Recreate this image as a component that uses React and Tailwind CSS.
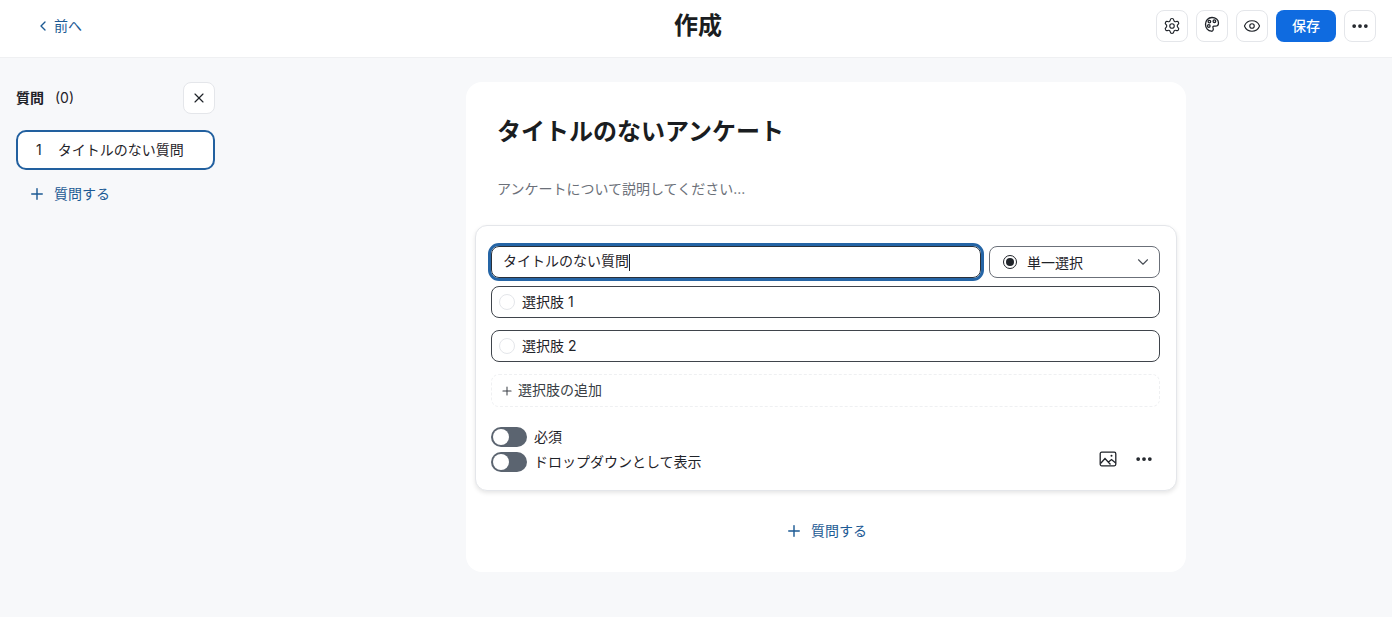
import React from "react";
import { ChevronLeft, ChevronDown, Ellipsis, Eye, Plus, Settings, X } from "lucide-react";

const FONT = "font-['Inter','Noto_Sans_CJK_JP',sans-serif]";

function IconButton({ children }) {
  return (
    <button className="flex h-8 w-8 items-center justify-center rounded-lg border border-[#e4e6ea] bg-white text-[#1f2329]">
      {children}
    </button>
  );
}

// face-like palette, sits a little high in its button
function PaletteIcon() {
  return (
    <svg width="16" height="17" viewBox="0 0 16 17" fill="none" stroke="currentColor" strokeWidth="1.3" className="-mt-1">
      <path d="M8 1.5c3.6 0 6.5 2.4 6.5 5.4 0 2.2-1.7 3.2-3.4 3.2H10c-.9 0-1.4.8-1 1.6.5 1 .4 2-.1 2.8-.3.5-.8.8-1.4.7C4 15 1.5 12 1.5 8.2 1.5 4.4 4.3 1.5 8 1.5Z" />
      <circle cx="5.4" cy="5.6" r="1.3" />
      <circle cx="10.4" cy="5.2" r="1.3" />
      <circle cx="4.8" cy="10" r="1.3" />
    </svg>
  );
}

function PhotoIcon() {
  return (
    <svg width="18" height="16" viewBox="0 0 18 16" fill="none" stroke="currentColor" strokeWidth="1.3">
      <rect x="1.2" y="1.2" width="15.6" height="13.6" rx="1.5" />
      <path d="M1.5 12.5 6 7.5l5.5 6M9.5 11l3-2.5 4.2 3.5" />
      <circle cx="12.5" cy="4.8" r="1" fill="currentColor" stroke="none" />
    </svg>
  );
}

function Toggle({ label }) {
  return (
    <div className="flex h-[25px] items-center gap-[7px]">
      <span className="flex h-5 w-9 items-center rounded-full bg-[#5b6470] pl-0.5">
        <span className="h-4 w-4 rounded-full bg-white" />
      </span>
      <span className="text-sm text-[#1f2329]">{label}</span>
    </div>
  );
}

function Choice({ label }) {
  return (
    <div className="flex h-8 items-center rounded-lg border border-[#3f444b] bg-white pl-[7px]">
      <span className="h-4 w-4 rounded-full border border-[#e4e6ea]" />
      <span className="ml-[7px] text-sm text-[#1f2329]">{label}</span>
    </div>
  );
}

function AddQuestion({ className = "" }) {
  return (
    <button className={`flex items-center gap-2 text-sm text-[#1c5a94] ${className}`}>
      <Plus size={18} strokeWidth={1.9} />
      質問する
    </button>
  );
}

export default function App() {
  return (
    <div className={`${FONT} flex min-h-[617px] flex-col bg-[#f7f8fa]`}>
      <header className="grid h-[58px] grid-cols-[1fr_auto_1fr] items-center border-b border-[#eff0f2] bg-white pb-[5px]">
        <button className="flex items-center gap-[3px] justify-self-start pl-[35px] text-sm text-[#1c5a94]">
          <ChevronLeft size={16} strokeWidth={2} />
          前へ
        </button>
        <h1 className="pl-1 text-2xl font-bold text-[#1a1d21]">作成</h1>
        <div className="flex items-center justify-end gap-2 pr-4">
          <IconButton><Settings size={18} strokeWidth={1.5} /></IconButton>
          <IconButton><PaletteIcon /></IconButton>
          <IconButton><Eye size={18} strokeWidth={1.5} /></IconButton>
          <button className="h-8 w-[60px] rounded-lg bg-[#0f6be0] text-sm font-medium text-white">保存</button>
          <IconButton><Ellipsis size={20} strokeWidth={2.5} /></IconButton>
        </div>
      </header>

      <div className="flex flex-1">
        <aside className="w-[260px] pl-4 pr-[45px] pt-6">
          <div className="flex h-8 items-center justify-between">
            <div className="flex items-center gap-[11px] text-sm text-[#1f2329]">
              <span className="font-bold">質問</span>
              <span>(0)</span>
            </div>
            <IconButton><X size={16} strokeWidth={1.75} /></IconButton>
          </div>
          <div className="mt-4 flex h-10 items-center rounded-[10px] border-2 border-[#22609f] bg-white pl-[18px] text-sm text-[#1f2329]">
            <span>1</span>
            <span className="ml-4">タイトルのない質問</span>
          </div>
          <AddQuestion className="ml-3 mt-[14px]" />
        </aside>

        <main className="flex flex-1 justify-center pt-6">
          <section className="h-[490px] w-[720px] rounded-2xl bg-white px-[9px]">
            <h2 className="pl-[22px] pt-8 text-2xl font-bold leading-9 text-[#1a1d21]">タイトルのないアンケート</h2>
            <p className="pl-[22px] pt-[29px] text-sm leading-5 text-[#6b7079]">アンケートについて説明してください...</p>

            <div className="mt-[26px] h-[266px] rounded-xl border border-[#e4e6ea] bg-white pl-[15px] pr-4 pt-5 shadow-[0_2px_4px_rgba(0,0,0,0.1)]">
              <div className="flex gap-2">
                <div className="flex h-8 flex-1 items-center rounded-lg border border-[#2a3038] pl-[11px] text-sm text-[#1f2329] outline-[3px] outline-offset-0 outline-[#2565a6]">
                  <span className="-mt-0.5">タイトルのない質問</span>
                  <span className="h-[17px] w-px bg-[#1f2329]" />
                </div>
                <div className="flex h-8 w-[171px] items-center rounded-lg border border-[#6b7079] pl-[13px] pr-[7px] text-sm text-[#1f2329]">
                  <span className="flex h-[14px] w-[14px] items-center justify-center rounded-full border border-[#1f2329]">
                    <span className="h-2 w-2 rounded-full bg-[#1f2329]" />
                  </span>
                  <span className="ml-[10px] mt-0.5 flex-1">単一選択</span>
                  <ChevronDown size={18} strokeWidth={1.5} className="text-[#4a4f57]" />
                </div>
              </div>
              <div className="mt-2 flex flex-col gap-3">
                <Choice label="選択肢 1" />
                <Choice label="選択肢 2" />
              </div>
              <div className="mt-3 flex h-[33px] items-center gap-1 rounded-lg border border-dashed border-[#eff0f2] pl-2 text-sm text-[#3a3f46]">
                <Plus size={14} strokeWidth={1.75} />
                <span className="-mt-px">選択肢の追加</span>
              </div>
              <div className="relative mt-[17px]">
                <Toggle label="必須" />
                <Toggle label="ドロップダウンとして表示" />
                <div className="absolute bottom-[5px] right-[6px] flex items-center gap-[17px] text-[#1f2329]">
                  <PhotoIcon />
                  <Ellipsis size={20} strokeWidth={2.5} />
                </div>
              </div>
            </div>

            <div className="flex justify-center pt-[30px]">
              <AddQuestion />
            </div>
          </section>
        </main>
      </div>
    </div>
  );
}
